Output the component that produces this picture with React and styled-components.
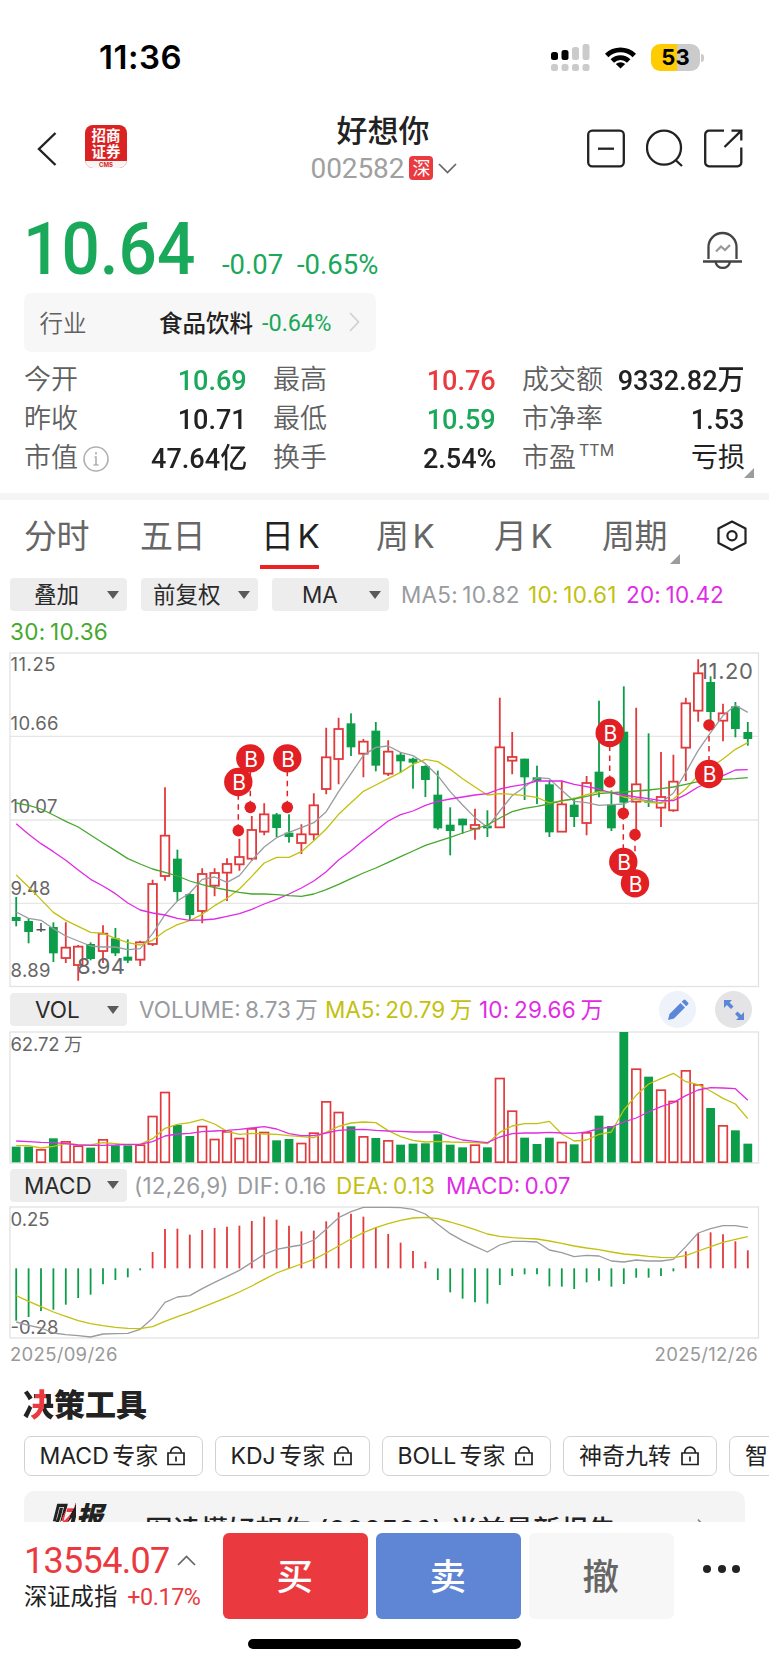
import React, { useState } from 'react'
import styled, { createGlobalStyle } from 'styled-components';

const GREEN = '#1aa85a';
const RED = '#ea3a40';
const UP = '#e23a3c';
const DOWN = '#0c9d48';
const UI = `'Inter', 'Noto Sans CJK SC', sans-serif`;
const NUM = `'Roboto', 'Noto Sans CJK SC', sans-serif`;

const GlobalStyle = createGlobalStyle`
  * { box-sizing: border-box; }
  body { margin: 0; background: #fff; }
  svg { display: block; flex: none; }
`;

const Page = styled.div`
  width: 769px;
  height: 1665px;
  overflow: hidden;
  display: flex;
  flex-direction: column;
  background: #fff;
  color: #222;
  font-family: ${NUM};
  white-space: nowrap;
`;

const StatusBar = styled.div`
  height: 116px;
  padding: 0 65px 0 99px;
  display: flex;
  justify-content: space-between;
`;
const Clock = styled.div`
  font: 600 33px/115px ${UI};
  letter-spacing: 0.5px;
  color: #000;
`;
const StatusIcons = styled.div`
  display: flex;
  align-items: center;
  gap: 14px;
  padding-bottom: 1px;
`;
const Battery = styled.div`
  width: 49px;
  height: 27px;
  border-radius: 9px;
  background: linear-gradient(90deg, #ffcc02 53%, #cbcbcb 53%);
  font: 700 22px/27px ${UI};
  text-align: center;
  color: #000;
`;
const BatteryWrap = styled.div`
  display: flex;
  align-items: center;
  gap: 1px;
  &::after {
    content: '';
    width: 3px;
    height: 8px;
    border-radius: 0 3px 3px 0;
    background: #cbcbcb;
  }
`;

const Header = styled.div`
  height: 84px;
  padding: 0 26px 0 37px;
  display: grid;
  grid-template-columns: 1fr 160px 1fr;
`;
const HeaderSide = styled.div`
  display: flex;
  gap: ${p => p.$gap}px;
  padding-top: ${p => p.$top}px;
  justify-content: ${p => p.$end ? 'flex-end' : 'flex-start'};
`;
const Logo = styled.div`
  width: 42px;
  height: 43px;
  margin-top: -7px;
  border-radius: 8px;
  overflow: hidden;
  background: #db2222;
  color: #fff;
  text-align: center;
  font: 700 14.5px/16px 'Noto Sans CJK SC', sans-serif;
  padding-top: 2px;
  display: flex;
  flex-direction: column;
`;
const LogoFoot = styled.div`
  margin-top: 2px;
  flex: 1;
  background: #f7f4f4;
  color: #db2222;
  font: 700 6px/7px ${UI};
`;
const TitleBlock = styled.div`
  display: flex;
  flex-direction: column;
  align-items: center;
  margin: -3px 7px 0 -7px;
`;
const Title = styled.div`
  font: 500 31px/32px 'Noto Sans CJK SC', sans-serif;
`;
const CodeRow = styled.div`
  display: flex;
  align-items: center;
  gap: 5px;
  margin: 7px 0 0 2px;
  height: 32px;
  font-size: 28px;
  letter-spacing: -0.1px;
  color: #a0a0a0;
`;
const Market = styled.span`
  width: 24px;
  height: 24px;
  border-radius: 4px;
  background: ${RED};
  color: #fff;
  font: 400 18px/23px 'Noto Sans CJK SC', sans-serif;
  letter-spacing: 0;
  text-align: center;
`;

const Quote = styled.div`
  height: 93px;
  padding: 0 27px 0 23px;
  display: flex;
  color: ${GREEN};
`;
const Price = styled.div`
  width: 199px;
  font-weight: 500;
  font-size: 73px;
  line-height: 99px;
  transform: scaleX(0.925);
  transform-origin: left;
`;
const Change = styled.div`
  font-size: 27.5px;
  line-height: 129px;
  width: 75px;
`;
const Bell = styled.div`
  margin: 31px 0 0 auto;
`;
const Industry = styled.div`
  width: 352px;
  height: 59px;
  margin-left: 23.5px;
  padding: 0 16px 1px 16px;
  border-radius: 7px;
  background: #f7f7f7;
  display: flex;
  align-items: center;
  font-size: 23.5px;
`;
const Sector = styled.span`
  margin-left: auto;
  font-weight: 500;
`;
const SectorChange = styled.span`
  margin: 1px 17px 0 9px;
  color: ${GREEN};
`;

const Stats = styled.div`
  height: 141px;
  padding: 9px 24px 0 24px;
  display: grid;
  grid-template-columns: 223px 223px 223px;
  grid-auto-rows: 39px;
  column-gap: 26px;
`;
const Stat = styled.div`
  display: flex;
  justify-content: space-between;
  align-items: center;
  font-size: 27px;
  line-height: 39px;
`;
const StatLabel = styled.span`
  display: flex;
  align-items: center;
  gap: 5px;
  color: #606060;
  font-weight: 350;
`;
const Sup = styled.sup`
  font: 400 16px/16px ${UI};
  margin: -18px 0 0 -2px;
`;
const StatValue = styled.span`
  height: 39px;
  font-size: ${p => p.$cjk ? 27 : 28.5}px;
  font-weight: ${p => p.$cjk ? 400 : 500};
  color: ${p => p.$tone === 'up' ? RED : p.$tone === 'down' ? GREEN : '#222'};
  transform: ${p => p.$cjk ? 'none' : 'scaleX(0.95)'};
  transform-origin: right;
  margin-left: -20px;
`;
const Corner = styled.div`
  width: 0;
  height: 0;
  margin: ${p => p.$margin};
  border-left: 10px solid transparent;
  border-bottom: 10px solid #9a9da0;
`;
const Divider = styled.div`
  height: 7px;
  flex: none;
  background: #f5f5f5;
`;

const Tabs = styled.div`
  height: 70px;
  flex: none;
  padding: 0 22px 0 24px;
  display: flex;
`;
const Tab = styled.div`
  height: 69px;
  width: ${p => p.$w}px;
  margin-right: ${p => p.$mr}px;
  padding-left: ${p => p.$active ? 1 : 0}px;
  font: 400 33px/73px ${UI};
  word-spacing: -5px;
  letter-spacing: -0.4px;
  cursor: pointer;
  display: flex;
  color: ${p => p.$active ? '#222' : '#666'};
  border-bottom: 4px solid ${p => p.$active ? '#ee2222' : 'transparent'};
`;
const Gear = styled.div`
  padding-top: 20px;
  margin-left: auto;
`;

const Legend = styled.div`
  height: ${p => p.$h}px;
  flex: none;
  padding: 0 17px ${p => p.$pb || 0}px 10px;
  display: flex;
  align-items: center;
  font: 400 22.5px/33px ${UI};
  word-spacing: -2px;
`;
const Pill = styled.div`
  width: 117px;
  height: 33px;
  margin-right: ${p => p.$mr}px;
  padding: 0 8px 0 ${p => p.$pl}px;
  border-radius: 4px;
  background: #ededed;
  display: flex;
  align-items: center;
  justify-content: space-between;
  color: #2a2a2a;
`;
const Caret = styled.span`
  border: 6px solid transparent;
  border-top: 8px solid #5a5a5a;
  border-bottom: 0;
`;
const Item = styled.span`
  width: ${p => p.$w}px;
  color: ${p => p.$color};
  letter-spacing: ${p => p.$ls ?? 0.2}px;
`;
const Round = styled.div`
  width: 37px;
  height: 37px;
  margin-left: ${p => p.$ml}px;
  border-radius: 50%;
  background: ${p => p.$bg};
  display: flex;
  align-items: center;
  justify-content: center;
`;
const Plot = styled.div`
  height: ${p => p.$h}px;
  flex: none;
  padding-left: 9px;
  margin-bottom: ${p => p.$mb}px;
`;
const Dates = styled.div`
  height: 33px;
  flex: none;
  padding: 0 11px 0 10px;
  display: flex;
  justify-content: space-between;
  font: 400 18.5px/33px ${UI};
  letter-spacing: 0.3px;
  color: #999;
`;

const ToolsTitle = styled.div`
  height: 65px;
  flex: none;
  padding-left: 23px;
  font: 900 31px/64px 'Noto Sans CJK SC', sans-serif;
`;
const Accent = styled.span`
  background: linear-gradient(${p => p.$angle}deg, #222 ${p => p.$from}%, ${RED} ${p => p.$from}%, ${RED} ${p => p.$to}%, #222 ${p => p.$to}%);
  background-clip: text;
  color: transparent;
`;
const Chips = styled.div`
  height: 40px;
  flex: none;
  padding-left: 23.5px;
  display: flex;
  gap: 12px;
  overflow: hidden;
`;
const Chip = styled.div`
  flex: none;
  width: ${p => p.$w}px;
  padding: 0 17px 0 15px;
  border: 1px solid #d2d2d2;
  border-radius: 7px;
  display: flex;
  align-items: center;
  justify-content: space-between;
  font: 400 23px/38px ${UI};
  word-spacing: -3px;
`;
const Report = styled.div`
  height: 31px;
  flex: none;
  margin: 15px 24px 0;
  padding: 0 38px 0 26px;
  border-radius: 10px 10px 0 0;
  background: #f4f4f4;
  overflow: hidden;
  display: flex;
`;
const ReportTag = styled.div`
  width: 95px;
  font: italic 900 27px/48px 'Noto Sans CJK SC', sans-serif;
  letter-spacing: -1px;
  color: #222;
`;
const ReportText = styled.div`
  flex: 1;
  font: 500 27.5px/79px ${UI};
  letter-spacing: 0.1px;
`;

const BottomBar = styled.div`
  height: 97px;
  flex: none;
  padding: 11px 29px 0 24px;
  display: flex;
`;
const Index = styled.div`
  width: 199px;
`;
const IndexValue = styled.div`
  display: flex;
  align-items: center;
  gap: 7px;
  height: 50px;
  padding-top: 5px;
  font-size: 36px;
  letter-spacing: -0.7px;
  color: ${RED};
`;
const IndexName = styled.div`
  display: flex;
  gap: 10px;
  font-size: 23.3px;
  line-height: 28px;
`;
const IndexChange = styled.span`
  color: ${RED};
  letter-spacing: -0.4px;
`;
const Action = styled.button`
  width: 144.5px;
  height: 86px;
  margin-right: 8.5px;
  border: 0;
  border-radius: 6px;
  background: ${p => p.$bg};
  color: ${p => p.$color || '#fff'};
  font: 500 36.5px/82px 'Noto Sans CJK SC', sans-serif;
  padding: 0 1px 2px 0;
`;
const More = styled.div`
  margin: 32px 0 0 auto;
  display: flex;
  gap: 6.5px;
  span {
    width: 8px;
    height: 8px;
    border-radius: 50%;
    background: #222;
  }
`;
const HomeBar = styled.div`
  width: 273px;
  height: 10px;
  flex: none;
  margin: 20px 0 0 248px;
  border-radius: 5px;
  background: #000;
`;

// [direction, high, top, bottom, low] in thirds of a pixel
const candles = [
  ['g', 740, 800, 812, 828], ['g', 805, 812, 845, 879], ['k', 818, 838, 838, 845], ['g', 816, 830, 909, 935],
  ['r', 816, 892, 923, 938], ['r', 884, 889, 944, 991], ['g', 876, 881, 926, 930], ['r', 825, 850, 902, 938],
  ['g', 833, 864, 909, 917], ['g', 867, 919, 931, 938], ['r', 871, 876, 928, 947], ['r', 688, 701, 881, 887],
  ['r', 411, 556, 677, 691], ['g', 598, 625, 725, 752], ['g', 729, 731, 794, 810], ['r', 654, 671, 782, 819],
  ['r', 654, 668, 706, 738], ['r', 624, 641, 667, 752], ['r', 565, 620, 642, 661], ['r', 497, 539, 625, 631],
  ['r', 459, 492, 544, 555], ['g', 488, 492, 533, 560], ['g', 492, 547, 560, 577], ['r', 522, 552, 578, 611],
  ['r', 429, 465, 552, 570], ['r', 232, 321, 416, 432], ['r', 202, 236, 326, 402], ['g', 189, 219, 291, 317],
  ['r', 266, 274, 310, 381], ['g', 215, 241, 346, 363], ['r', 270, 304, 370, 377], ['g', 306, 313, 333, 368],
  ['g', 322, 325, 337, 415], ['g', 345, 347, 389, 440], ['g', 361, 433, 534, 538], ['g', 471, 523, 542, 615],
  ['g', 505, 505, 525, 550], ['r', 475, 524, 535, 568], ['g', 480, 526, 534, 560], ['r', 142, 291, 531, 531],
  ['r', 245, 320, 331, 372], ['g', 325, 325, 381, 449], ['g', 346, 381, 392, 461], ['g', 391, 402, 546, 560],
  ['r', 391, 462, 544, 544], ['g', 442, 463, 500, 530], ['r', 377, 398, 518, 555], ['g', 151, 364, 425, 441],
  ['g', 420, 463, 534, 542], ['g', 108, 244, 457, 473], ['r', 172, 402, 454, 545], ['g', 249, 450, 457, 470],
  ['r', 305, 440, 472, 530], ['r', 313, 394, 480, 484], ['r', 142, 159, 292, 392], ['r', 27, 69, 181, 214],
  ['g', 78, 95, 185, 211], ['r', 160, 189, 211, 273], ['g', 155, 168, 236, 261], ['g', 215, 245, 266, 286],
];
const priceLines = [
  ['#999ba0', [785, 804, 810, 835, 857, 872, 887, 890, 890, 898, 895, 850, 793, 752, 728, 687, 680, 696, 676, 630, 590, 562, 546, 532, 517, 484, 424, 370, 315, 291, 287, 306, 316, 340, 376, 424, 464, 502, 531, 482, 436, 410, 382, 385, 420, 453, 457, 465, 463, 461, 445, 452, 457, 428, 366, 300, 247, 196, 165, 186]],
  ['#c3c00f', [674, 710, 748, 786, 810, 828, 846, 849, 864, 877, 884, 870, 842, 823, 811, 792, 766, 744, 716, 678, 638, 621, 621, 604, 571, 536, 492, 457, 423, 404, 385, 366, 342, 327, 334, 357, 385, 410, 434, 430, 432, 436, 441, 458, 452, 445, 433, 424, 425, 440, 447, 456, 459, 446, 416, 375, 352, 326, 297, 277]],
  ['#e02be6', [520, 552, 580, 604, 630, 659, 687, 707, 730, 758, 779, 788, 794, 804, 810, 809, 806, 798, 790, 777, 761, 747, 731, 713, 692, 664, 629, 601, 570, 541, 512, 493, 482, 465, 453, 446, 440, 434, 430, 416, 408, 402, 392, 392, 392, 402, 409, 416, 428, 434, 440, 445, 451, 451, 433, 410, 395, 376, 359, 358]],
  ['#46a82c', [458, 465, 476, 494, 513, 530, 554, 578, 601, 625, 641, 656, 666, 677, 692, 703, 712, 719, 726, 731, 731, 733, 736, 738, 731, 718, 702, 685, 668, 653, 636, 619, 602, 585, 573, 561, 548, 536, 524, 503, 484, 474, 468, 461, 451, 446, 438, 430, 427, 425, 422, 419, 415, 410, 402, 394, 390, 387, 385, 382]],
];
// [x, dot, badge]
const trades = [
  [229.3, 541, 395], [241.3, 471, 324], [278.3, 471, 324], [600.7, 395, 248],
  [614.3, 489, 635], [626, 553, 699], [700, 224, 371],
];
const volumes = [484, 484, 493, 459, 469, 482, 487, 463, 480, 480, 479, 393, 321, 419, 452, 423, 462, 439, 459, 430, 441, 465, 461, 474, 443, 349, 381, 423, 454, 458, 466, 478, 475, 474, 447, 478, 486, 479, 486, 279, 377, 457, 476, 457, 471, 477, 442, 391, 422, 140, 251, 274, 314, 348, 256, 298, 368, 421, 435, 475];
const volumeLines = [
  ['#c3c00f', [481, 481, 488, 483, 475, 478, 479, 472, 475, 478, 477, 460, 429, 417, 412, 402, 416, 438, 447, 444, 446, 447, 451, 454, 457, 441, 423, 413, 410, 412, 436, 454, 465, 470, 468, 470, 471, 472, 475, 441, 422, 415, 415, 408, 446, 467, 464, 447, 440, 374, 330, 296, 280, 264, 289, 298, 317, 339, 356, 400]],
  ['#e02be6', [467, 469, 471, 472, 475, 479, 480, 480, 479, 477, 477, 469, 452, 446, 444, 439, 437, 435, 432, 428, 424, 431, 445, 451, 451, 443, 435, 433, 432, 435, 437, 438, 440, 440, 440, 453, 464, 468, 472, 455, 445, 443, 443, 441, 443, 444, 440, 430, 425, 410, 398, 380, 364, 352, 331, 314, 307, 308, 310, 345]],
];
const macd = [1008, 997, 979, 975, 960, 940, 930, 899, 886, 878, 857, 802, 733, 732, 750, 736, 730, 726, 723, 709, 696, 705, 723, 740, 738, 710, 683, 687, 696, 729, 748, 774, 799, 831, 886, 923, 942, 953, 957, 901, 874, 869, 869, 905, 906, 913, 893, 888, 906, 898, 879, 879, 874, 860, 800, 745, 743, 749, 770, 797];
const macdLines = [
  ['#999ba0', [1012, 1022, 1030, 1045, 1050, 1053, 1057, 1048, 1047, 1046, 1034, 1001, 953, 937, 933, 912, 893, 875, 857, 833, 809, 794, 787, 781, 766, 734, 699, 681, 668, 668, 668, 669, 674, 688, 719, 747, 768, 785, 802, 781, 770, 770, 772, 796, 804, 816, 812, 814, 829, 832, 826, 829, 829, 824, 786, 745, 732, 723, 723, 729]],
  ['#c3c00f', [933, 950, 966, 982, 995, 1008, 1017, 1023, 1028, 1031, 1032, 1026, 1010, 996, 983, 968, 953, 938, 922, 904, 884, 865, 851, 838, 824, 805, 784, 763, 744, 729, 717, 707, 700, 698, 702, 712, 723, 735, 748, 755, 759, 761, 763, 769, 776, 784, 790, 795, 802, 808, 811, 815, 818, 819, 813, 799, 786, 773, 764, 756]],
];

const px = (i) => 7.2 + i * 12.4;

const Lines = ({ data, y }) => data.map(([color, pts]) => (
  <polyline key={color} fill="none" stroke={color} strokeWidth="1.3" strokeLinejoin="round"
    points={pts.map((v, i) => `${px(i)},${y(v)}`).join(' ')} />
));

const Label = ({ x = 1.5, y, w, size = 18.5, children }) => (
  <text x={x} y={y} textLength={w} fontFamily={UI} fontSize={size} fill="#666">{children}</text>
);

const Frame = ({ h, children }) => (
  <svg width="752" height={h + 2}>
    <rect x="1" y="1" width="748.5" height={h} fill="none" stroke="#e2e2e2" strokeWidth="1.3" />
    {children}
  </svg>
);

const PriceChart = () => {
  const y = (v) => (v - 8) / 3 + 1;
  return (
    <Frame h={333.5}>
      {[258, 509, 759].map(v => <line key={v} x1="1" x2="749" y1={y(v)} y2={y(v)} stroke="#e6e6e6" strokeWidth="1.3" />)}
      <Label y={y(63)} w={45}>11.25</Label>
      <Label y={y(240)} w={48}>10.66</Label>
      <Label y={y(487)} w={47}>10.07</Label>
      <Label y={y(733)} w={40}>9.48</Label>
      <Label y={y(979)} w={40}>8.89</Label>
      {candles.map(([dir, hi, top, bottom, lo], i) => {
        const x = px(i);
        if (dir === 'k') {
          return <path key={i} d={`M${x} ${y(hi)}V${y(lo)}M${x - 4.5} ${y(top)}h9`} stroke="#555" strokeWidth="1.5" />;
        }
        if (dir === 'g') {
          return (
            <g key={i} fill={DOWN}>
              <rect x={x - 0.9} y={y(hi)} width="1.8" height={(lo - hi) / 3} />
              <rect x={x - 4.4} y={y(top)} width="8.8" height={(bottom - top) / 3} />
            </g>
          );
        }
        return (
          <g key={i} fill="none" stroke={UP} strokeWidth="1.8">
            <path d={`M${x} ${y(hi)}V${y(top)}M${x} ${y(bottom)}V${y(lo)}`} />
            <rect x={x - 4.3} y={y(top)} width="8.6" height={(bottom - top) / 3} />
          </g>
        );
      })}
      <Lines data={priceLines} y={y} />
      <Label x={68} y={y(972)} w={48} size={22}>8.94</Label>
      <Label x={690} y={y(87)} w={54} size={22}>11.20</Label>
      {trades.map(([x, dot, badge]) => (
        <g key={x}>
          <line x1={x} x2={x} y1={y(dot)} y2={y(badge)} stroke="#e22024" strokeWidth="1.5" strokeDasharray="5.5 4.5" strokeDashoffset="-1" />
          <circle cx={x} cy={y(dot)} r="5.8" fill="#e22024" />
          <circle cx={x} cy={y(badge)} r="14.2" fill="#e22024" />
          <text x={x + 0.7} y={y(badge) + 8.3} textAnchor="middle" fontFamily={UI} fontSize="21" fill="#fff">B</text>
        </g>
      ))}
    </Frame>
  );
}

const VolumeChart = () => {
  const y = (v) => (v - 140) / 3 + 1;
  return (
    <Frame h={131}>
      <Label y={y(196)} w={49}>62.72</Label>
      <Label x={55} y={y(196)}>万</Label>
      {volumes.map((v, i) => candles[i][0] === 'g'
        ? <rect key={i} x={px(i) - 4.4} y={y(v)} width="8.8" height={(531 - v) / 3} fill={DOWN} />
        : <rect key={i} x={px(i) - 4.3} y={y(v) + 0.2} width="8.6" height={(530 - v) / 3} fill="#fff" stroke={UP} strokeWidth="1.7" />
      )}
      <Lines data={volumeLines} y={y} />
    </Frame>
  );
}

const MacdChart = () => {
  const y = (v) => (v - 667) / 3 + 1;
  return (
    <Frame h={131}>
      {macd.map((v, i) => (
        <line key={i} x1={px(i)} x2={px(i)} y1={y(851)} y2={y(v)} stroke={v > 851 ? DOWN : UP} strokeWidth="1.8" />
      ))}
      <Label y={y(723)} w={39}>0.25</Label>
      <Label y={y(1047)} w={48}>-0.28</Label>
      <Lines data={macdLines} y={y} />
    </Frame>
  );
}

const Lock = () => (
  <svg width="18" height="20" viewBox="0 0 18 20" fill="none" stroke="#222" strokeWidth="1.7">
    <path d="M1 7h16v11.500H1zM3.500 7C4 3 6 1.200 9 1.200S14 3 14.500 7M9 10.500v5" />
  </svg>
);

const stats = [
  { label: '今开', value: '10.69', tone: 'down' }, { label: '最高', value: '10.76', tone: 'up' }, { label: '成交额', value: '9332.82万' },
  { label: '昨收', value: '10.71' }, { label: '最低', value: '10.59', tone: 'down' }, { label: '市净率', value: '1.53' },
  { label: '市值', value: '47.64亿', info: true }, { label: '换手', value: '2.54%' }, { label: '市盈', value: '亏损', ttm: true, cjk: true },
];
const tabs = [['分时', 66, 50], ['五日', 66, 54], ['日 K', 59, 57], ['周 K', 66, 52], ['月 K', 66, 42], ['周期', 66, 0]];
const tools = [['MACD 专家', 179], ['KDJ 专家', 155], ['BOLL 专家', 169.5], ['神奇九转', 154], ['智能盯盘', 155]];

const App = () => {
  const [tab, setTab] = useState('日 K');

  return (
    <Page>
      <GlobalStyle />
      <StatusBar>
        <Clock>11:36</Clock>
        <StatusIcons>
          <svg width="39" height="27" viewBox="0 0 39 27">
            <g fill="#000">
              <rect x="0" y="8" width="7" height="8" rx="2.5" />
              <rect x="10.5" y="6" width="7" height="10" rx="2.5" />
            </g>
            <g fill="#cbcbcb">
              <rect x="21" y="3" width="7" height="13" rx="2.5" />
              <rect x="31.5" y="0" width="7" height="16" rx="2.5" />
              {[0, 10.5, 21, 31.5].map(x => <rect key={x} x={x} y="20" width="7" height="7" rx="2.5" />)}
            </g>
          </svg>
          <svg width="33" height="24" viewBox="0 0 33 24">
            <path d="M1 9.3a22 22 0 0 1 31 0l-3.4 3.5a17.2 17.2 0 0 0-24.2 0zM6.6 14.8a14 14 0 0 1 19.8 0l-3.4 3.4a9.3 9.3 0 0 0-13 0zM11.8 19.6a7 7 0 0 1 9.4 0L16.5 24z" fill="#000" transform="translate(0 -1.5)" />
          </svg>
          <BatteryWrap><Battery>53</Battery></BatteryWrap>
        </StatusIcons>
      </StatusBar>

      <Header>
        <HeaderSide $top={16} $gap={28}>
          <svg width="20" height="34" viewBox="0 0 20 34" fill="none" stroke="#222" strokeWidth="2.4">
            <path d="M18.5 1L2 17l16.500 16" />
          </svg>
          <Logo>
            <div>招商</div>
            <div>证券</div>
            <LogoFoot>CMS</LogoFoot>
          </Logo>
        </HeaderSide>
        <TitleBlock>
          <Title>好想你</Title>
          <CodeRow>
            002582<Market>深</Market>
            <svg width="19" height="11" viewBox="0 0 19 11" fill="none" stroke="#666" strokeWidth="1.7"><path d="M1 1l8.500 8.500L18 1" /></svg>
          </CodeRow>
        </TitleBlock>
        <HeaderSide $top={13} $gap={20.5} $end>
          <svg width="38" height="39" viewBox="0 0 38 39" fill="none" stroke="#222" strokeWidth="2.3">
            <rect x="1.2" y="1.700" width="35.600" height="35.600" rx="4" />
            <path d="M11 19.700h16" />
          </svg>
          <svg width="38" height="39" viewBox="0 0 38 39" fill="none" stroke="#222" strokeWidth="2.3">
            <circle cx="18" cy="18.700" r="17" />
            <path d="M29.500 31l6.500 6" />
          </svg>
          <svg width="39" height="39" viewBox="0 0 39 39" fill="none" stroke="#222" strokeWidth="2.3">
            <path d="M20 1.700H5a3.800 3.800 0 0 0-3.800 3.800v28a3.800 3.800 0 0 0 3.800 3.800h28.500a3.800 3.800 0 0 0 3.800-3.800V18.500M27.500 1.700h9.800v9.800M37.300 1.700L20.500 18" />
          </svg>
        </HeaderSide>
      </Header>

      <Quote>
        <Price>10.64</Price>
        <Change>-0.07</Change>
        <Change>-0.65%</Change>
        <Bell>
          <svg width="39" height="41" viewBox="0 0 39 41" fill="none" stroke="#444" strokeWidth="2.3">
            <path d="M5.500 28V16a14 14 0 0 1 28 0v12M0 30.500h39M12.500 31a7.500 8 0 0 0 14.500 0" />
            <path d="M13 20.500l5-5 4 3.500 5-5" stroke="#999" />
          </svg>
        </Bell>
      </Quote>

      <Industry>
        <StatLabel>行业</StatLabel>
        <Sector>食品饮料</Sector>
        <SectorChange>-0.64%</SectorChange>
        <svg width="11" height="20" viewBox="0 0 11 20" fill="none" stroke="#d0d0d0" strokeWidth="1.700"><path d="M1 1l8.500 9L1 19" /></svg>
      </Industry>

      <Stats>
        {stats.map(s => (
          <Stat key={s.label}>
            <StatLabel>
              {s.label}
              {s.ttm && <Sup>TTM</Sup>}
              {s.info && (
                <svg width="26" height="26" viewBox="0 0 26 26" fill="none" stroke="#b0b0b0" strokeWidth="1.600">
                  <circle cx="13" cy="13" r="12" />
                  <path d="M11.500 11H13v8M10.500 19h5M13 6v2.500" />
                </svg>
              )}
            </StatLabel>
            <StatValue $tone={s.tone} $cjk={s.cjk}>{s.value}</StatValue>
          </Stat>
        ))}
        <Corner $margin="-10px 0 0 720px" />
      </Stats>
      <Divider />

      <Tabs>
        {tabs.map(([t, w, mr]) => (
          <Tab key={t} $w={w} $mr={mr} $active={t === tab} onClick={() => setTab(t)}>
            {t}
            {t === '周期' && <Corner $margin="54px -14px 0 3px" />}
          </Tab>
        ))}
        <Gear>
          <svg width="30" height="32" viewBox="0 0 30 32" fill="none" stroke="#222" strokeWidth="2.200">
            <path d="M15 1.500l13.500 7v14.500L15 30 1.500 23V8.500z" strokeLinejoin="round" />
            <circle cx="15" cy="15.700" r="4.600" />
          </svg>
        </Gear>
      </Tabs>

      <Legend $h={49}>
        <Pill $mr={14} $pl={24}>叠加<Caret /></Pill>
        <Pill $mr={14} $pl={12}>前复权<Caret /></Pill>
        <Pill $mr={12} $pl={30}>MA<Caret /></Pill>
        <Item $w={127} $color="#999ba0">MA5: 10.82</Item>
        <Item $w={98} $color="#c3c00f" $ls={0.3}>10: 10.61</Item>
        <Item $w={98} $color="#e02be6">20: 10.42</Item>
      </Legend>
      <Legend $h={33} $pb={9}>
        <Item $w={98} $color="#46a82c" $ls={0.3}>30: 10.36</Item>
      </Legend>
      <Plot $h={335} $mb={5}><PriceChart /></Plot>

      <Legend $h={39} $pb={4}>
        <Pill $mr={12} $pl={25}>VOL<Caret /></Pill>
        <Item $w={186} $color="#999ba0" $ls={0}>VOLUME: 8.73 万</Item>
        <Item $w={154} $color="#c3c00f" $ls={0}>MA5: 20.79 万</Item>
        <Item $w={124} $color="#e02be6" $ls={0.2}>10: 29.66 万</Item>
        <Round $bg="#edf2fb" $ml={56}>
          <svg width="22" height="22" viewBox="0 0 22 22" fill="#5c86d6">
            <path d="M1 21l1.500-6L13.500 4l4.500 4.500L7 19.500zM14.700 2.800l1.800-1.800a1.500 1.500 0 0 1 2 0l2.500 2.500a1.500 1.500 0 0 1 0 2l-1.800 1.800z" />
          </svg>
        </Round>
        <Round $bg="#e4e4e6" $ml={19}>
          <svg width="22" height="22" viewBox="0 0 22 22" fill="#5c86d6">
            <path d="M1 1h8L6.500 3.500l4 4-2.500 2.500-4.200-4L1 9zM21 21h-8l2.500-2.500-3.500-3.500 2.500-2.500 3.700 3.500L21 13z" />
          </svg>
        </Round>
      </Legend>
      <Plot $h={132} $mb={3}><VolumeChart /></Plot>

      <Legend $h={40} $pb={2}>
        <Pill $mr={7} $pl={14}>MACD<Caret /></Pill>
        <Item $w={103} $color="#999ba0">(12,26,9)</Item>
        <Item $w={99} $color="#999ba0">DIF: 0.16</Item>
        <Item $w={110} $color="#c3c00f">DEA: 0.13</Item>
        <Item $w={130} $color="#e02be6" $ls={0}>MACD: 0.07</Item>
      </Legend>
      <Plot $h={132} $mb={0}><MacdChart /></Plot>
      <Dates><span>2025/09/26</span><span>2025/12/26</span></Dates>

      <ToolsTitle><Accent $angle={100} $from={38} $to={66}>决</Accent>策工具</ToolsTitle>
      <Chips>
        {tools.map(([name, w]) => <Chip key={name} $w={w}>{name}<Lock /></Chip>)}
      </Chips>
      <Report>
        <ReportTag><Accent $angle={115} $from={52} $to={68}>财</Accent>报</ReportTag>
        <ReportText>图读懂好想你 (002582) 当前最新报告</ReportText>
        <svg width="10" height="46" viewBox="0 0 10 46" fill="none" stroke="#888" strokeWidth="1.700"><path d="M1 28.500l7 8-7 8" /></svg>
      </Report>

      <BottomBar>
        <Index>
          <IndexValue>
            13554.07
            <svg width="19" height="11" viewBox="0 0 19 11" fill="none" stroke="#666" strokeWidth="1.700"><path d="M1 10L9.500 1.500 18 10" /></svg>
          </IndexValue>
          <IndexName>深证成指<IndexChange>+0.17%</IndexChange></IndexName>
        </Index>
        <Action $bg={RED}>买</Action>
        <Action $bg="#5f86d5">卖</Action>
        <Action $bg="#f7f7f7" $color="#666">撤</Action>
        <More><span /><span /><span /></More>
      </BottomBar>
      <HomeBar />
    </Page>
  )
}

export default App
